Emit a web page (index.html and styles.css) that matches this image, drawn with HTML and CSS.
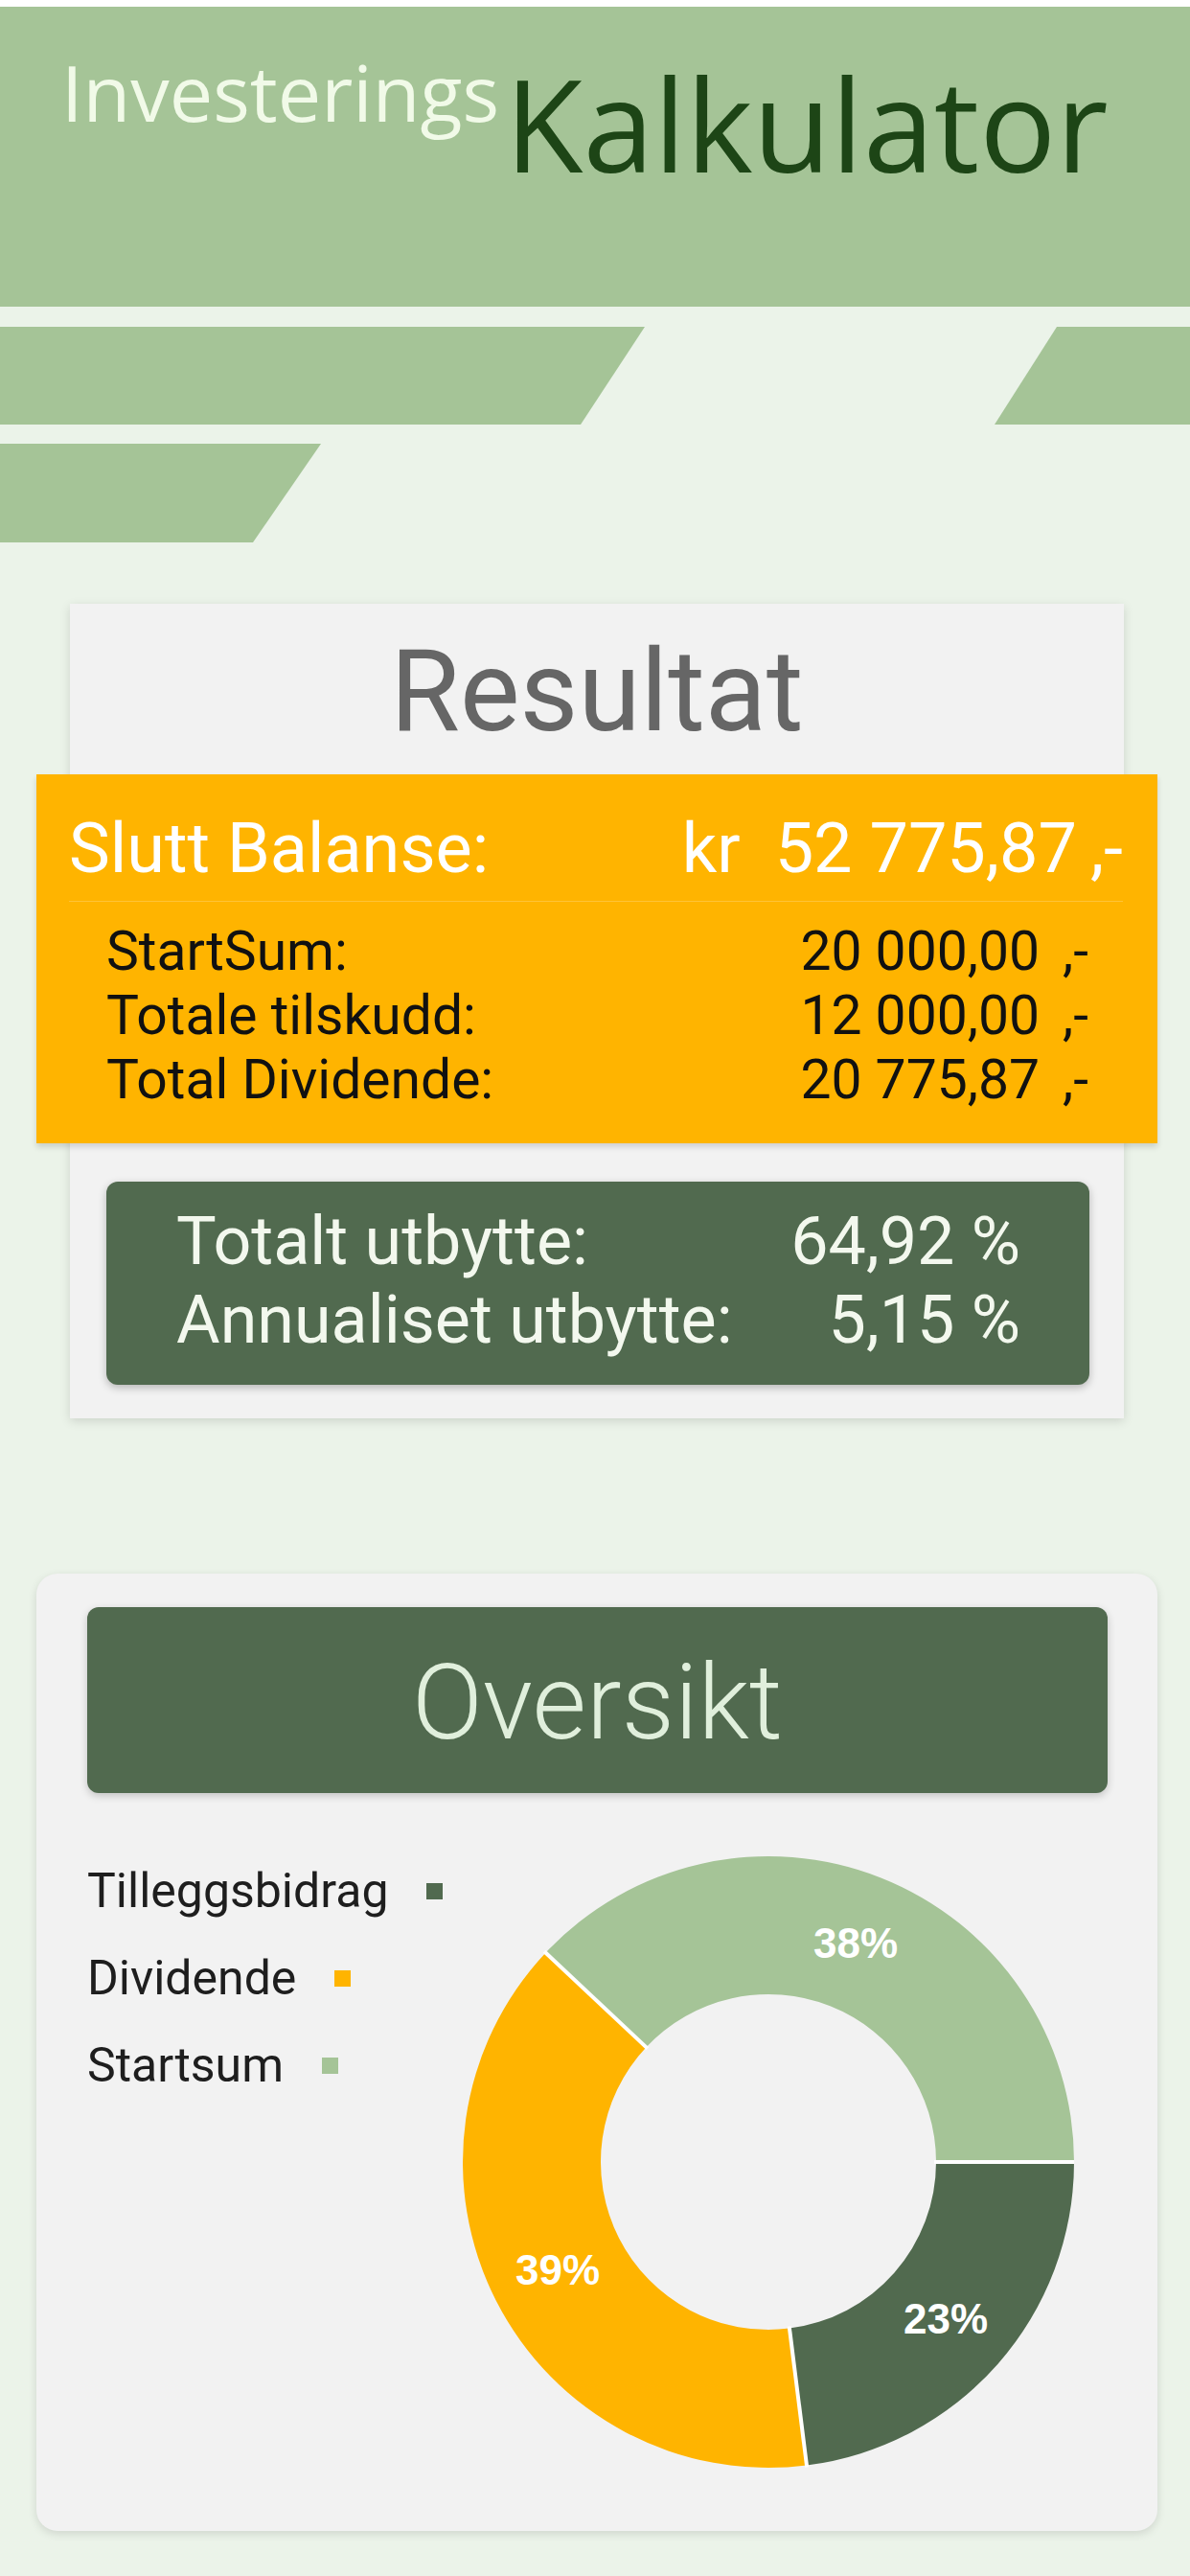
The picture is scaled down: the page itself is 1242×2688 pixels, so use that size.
FILE: index.html
```html
<!DOCTYPE html>
<html lang="no">
<head>
<meta charset="utf-8">
<title>InvesteringsKalkulator</title>
<link rel="stylesheet" href="styles.css">
</head>
<body>
<div class="page">
  <div class="topline"></div>
  <header class="hero">
    <span class="title-a">Investerings</span><span class="title-b">Kalkulator</span>
  </header>
  <svg class="stripes" viewBox="0 0 1242 246" aria-hidden="true">
    <polygon points="0,21 673,21 606,123 0,123" fill="#a5c497"/>
    <polygon points="1103,21 1242,21 1242,123 1038,123" fill="#a5c497"/>
    <polygon points="0,143 335,143 264,246 0,246" fill="#a5c497"/>
  </svg>

  <main>
    <section class="result-card">
      <h1 class="result-title">Resultat</h1>
      <div class="balance">
        <div class="balance-main">
          <span>Slutt Balanse:</span>
          <span class="bal-val"><span class="kr">kr</span><span>52&nbsp;775,87</span><span class="suffix-big">,-</span></span>
        </div>
        <div class="balance-rows">
          <span>StartSum:</span><span class="num">20&nbsp;000,00</span><span class="suffix">,-</span>
          <span>Totale tilskudd:</span><span class="num">12&nbsp;000,00</span><span class="suffix">,-</span>
          <span>Total Dividende:</span><span class="num">20&nbsp;775,87</span><span class="suffix">,-</span>
        </div>
      </div>
      <div class="yield">
        <span>Totalt utbytte:</span><span class="val">64,92 %</span>
        <span>Annualiset utbytte:</span><span class="val">5,15 %</span>
      </div>
    </section>

    <section class="overview-card">
      <h2 class="overview-head">Oversikt</h2>
      <div class="chart-area">
        <ul class="legend">
          <li>Tilleggsbidrag<span class="swatch sw-dark"></span></li>
          <li>Dividende<span class="swatch sw-orange"></span></li>
          <li>Startsum<span class="swatch sw-light"></span></li>
        </ul>
        <svg class="donut" viewBox="0 0 638 638">
          <path d="M638 319 A319 319 0 0 1 358.98 635.48 L340.93 492.62 A175 175 0 0 0 494 319 Z" fill="#516a4f"/>
          <path d="M358.98 635.48 A319 319 0 0 1 86.46 100.63 L191.43 199.2 A175 175 0 0 0 340.93 492.62 Z" fill="#ffb400"/>
          <path d="M86.46 100.63 A319 319 0 0 1 638 319 L494 319 A175 175 0 0 0 191.43 199.2 Z" fill="#a5c497"/>
          <g stroke="#ffffff" stroke-width="4">
            <line x1="492" y1="319" x2="640" y2="319"/>
            <line x1="340.7" y1="490.6" x2="359.2" y2="637.5"/>
            <line x1="192.9" y1="200.6" x2="85" y2="99.3"/>
          </g>
          <g class="pct">
            <text x="410" y="90">38%</text>
            <text x="504" y="482">23%</text>
            <text x="99" y="431">39%</text>
          </g>
        </svg>
      </div>
    </section>
  </main>
</div>
</body>
</html>
```

FILE: styles.css
```css
html, body {
  margin: 0;
  padding: 0;
}

body {
  background: #ebf3e9;
  font-family: Roboto, "Liberation Sans", Arial, sans-serif;
}

.page {
  width: 1242px;
  min-height: 2688px;
}

.topline {
  height: 7px;
  background: #ffffff;
}

.hero {
  height: 313px;
  box-sizing: border-box;
  background: #a5c497;
  display: flex;
  align-items: flex-start;
  padding-left: 64px;
  font-family: "Open Sans", "DejaVu Sans", sans-serif;
  line-height: 1;
}

.title-a {
  font-size: 81px;
  color: #f1fae8;
  margin-top: 48px;
}

.title-b {
  font-size: 133px;
  color: #1d4516;
  margin-top: 55px;
  margin-left: 6px;
}

.stripes {
  display: block;
  width: 1242px;
  height: 246px;
}

main {
  display: block;
}

/* Resultat */
.result-card {
  margin: 64px 0 0 73px;
  width: 1100px;
  box-sizing: border-box;
  background: #f2f2f2;
  padding: 22px 0 35px;
  box-shadow: 0 3px 10px rgba(0, 0, 0, 0.13);
}

.result-title {
  margin: 0;
  font-weight: 400;
  font-size: 118px;
  line-height: 140px;
  color: #666666;
  text-align: center;
}

.balance {
  margin: 16px -35px 0;
  background: #ffb400;
  padding: 36px 0 33px;
  box-shadow: 0 4px 6px rgba(0, 0, 0, 0.14);
}

.balance-main {
  display: flex;
  justify-content: space-between;
  margin: 0 36px 0 34px;
  padding-bottom: 12px;
  border-bottom: 1px solid rgba(255, 255, 255, 0.22);
  font-size: 72px;
  line-height: 84px;
  color: #ffffff;
}

.bal-val {
  display: flex;
}

.kr {
  margin-right: 36px;
}

.suffix-big {
  margin-left: 14px;
}

.balance-rows {
  display: grid;
  grid-template-columns: 1fr auto auto;
  padding: 18px 72px 0 73px;
  font-size: 57px;
  line-height: 67px;
  color: #111111;
}

.balance-rows .num {
  text-align: right;
}

.suffix {
  margin-left: 24px;
}

.yield {
  margin: 40px 36px 0 38px;
  background: #516a4f;
  border-radius: 12px;
  padding: 21px 72px 27px 73px;
  display: grid;
  grid-template-columns: 1fr auto;
  font-size: 70px;
  line-height: 82px;
  color: #f3f8ee;
  box-shadow: 0 3px 8px rgba(0, 0, 0, 0.25);
}

.yield .val {
  text-align: right;
}

/* Oversikt */
.overview-card {
  margin: 162px 0 0 38px;
  width: 1170px;
  box-sizing: border-box;
  background: #f2f2f2;
  border-radius: 22px;
  padding: 35px 0 66px;
  box-shadow: 0 3px 10px rgba(0, 0, 0, 0.12);
}

.overview-head {
  margin: 0 52px 0 53px;
  height: 194px;
  box-sizing: border-box;
  padding-top: 6px;
  background: #516a4f;
  border-radius: 12px;
  display: flex;
  align-items: center;
  justify-content: center;
  color: #e0efdc;
  font-size: 109px;
  font-weight: 300;
  line-height: 1;
  box-shadow: 0 3px 8px rgba(0, 0, 0, 0.2);
}

.chart-area {
  display: flex;
  padding: 57px 87px 0 53px;
}

.legend {
  flex: 1;
  list-style: none;
  margin: 0;
  padding: 0;
  font-size: 50px;
  line-height: 91px;
  color: #1e1e1e;
}

.legend li {
  display: flex;
  align-items: center;
}

.swatch {
  width: 17px;
  height: 17px;
  margin-left: 40px;
}

.sw-dark { background: #516a4f; }
.sw-orange { background: #ffb400; }
.sw-light { background: #a5c497; }

.donut {
  display: block;
  flex: none;
  width: 638px;
  height: 638px;
  margin-top: 9px;
}

.pct text {
  font-family: "Liberation Sans", Arial, sans-serif;
  font-weight: 700;
  font-size: 44px;
  fill: #ffffff;
  text-anchor: middle;
  dominant-baseline: central;
}
```
